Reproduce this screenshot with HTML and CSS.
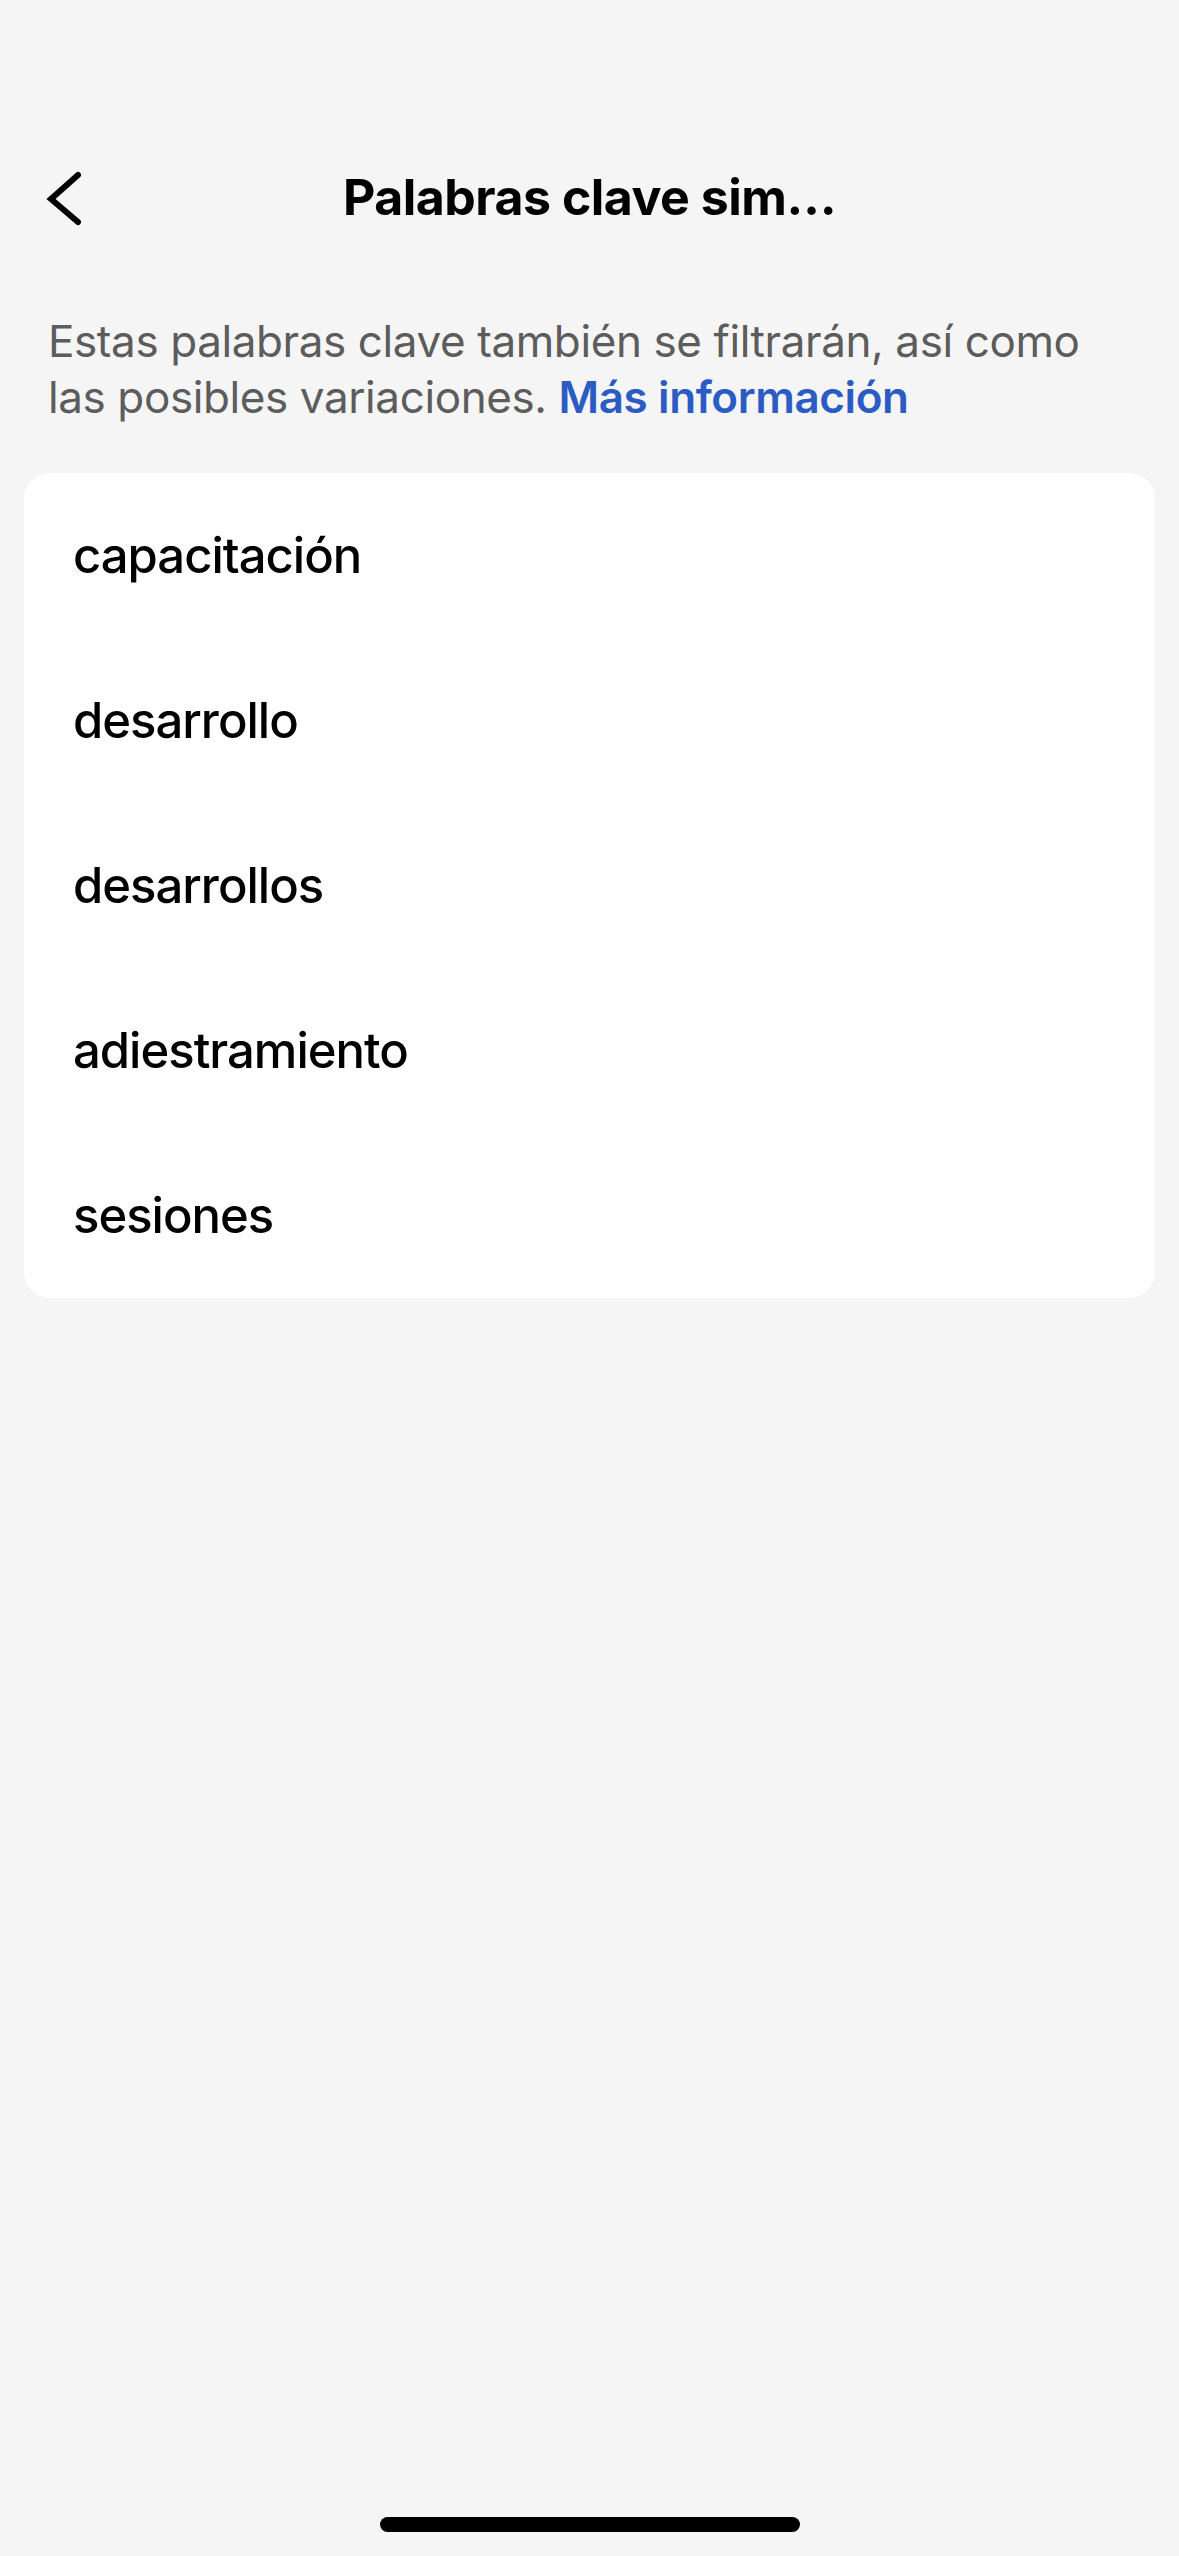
FILE: index.html
```html
<!DOCTYPE html>
<html lang="es">
<head>
<meta charset="utf-8">
<title>Palabras clave similares</title>
<link rel="stylesheet" href="styles.css">
</head>
<body>
<div class="screen">
  <header class="nav">
    <div class="nav-left">
      <svg class="back" width="40" height="60" viewBox="0 0 40 60" aria-hidden="true">
        <polyline points="34,6 7,30 34,53" fill="none" stroke="#000" stroke-width="6" stroke-linecap="round" stroke-linejoin="miter"/>
      </svg>
    </div>
    <h1 class="title">Palabras clave sim…</h1>
    <div class="nav-right"></div>
  </header>
  <p class="desc">Estas palabras clave también se filtrarán, así como las posibles variaciones. <a class="link" href="#">Más información</a></p>
  <ul class="card">
    <li class="row">capacitación</li>
    <li class="row">desarrollo</li>
    <li class="row">desarrollos</li>
    <li class="row">adiestramiento</li>
    <li class="row">sesiones</li>
  </ul>
  <div class="home-indicator"></div>
</div>
</body>
</html>
```
FILE: styles.css
```css
html, body {
  margin: 0;
  padding: 0;
  background: #f5f5f5;
}
body {
  font-family: Inter, "Noto Sans", "Liberation Sans", sans-serif;
  color: #000;
}
.screen {
  width: 1179px;
  height: 2556px;
  box-sizing: border-box;
  padding-top: 133px;
  position: relative;
  overflow: hidden;
  background: #f5f5f5;
}
.nav {
  height: 132px;
  display: grid;
  grid-template-columns: 1fr auto 1fr;
  align-items: center;
}
.nav-left {
  padding-left: 44px;
  display: flex;
  align-items: center;
}
.back {
  display: block;
}
.title {
  margin: 0;
  font-size: 50px;
  font-weight: 700;
  letter-spacing: -0.5px;
  line-height: 60px;
  padding-bottom: 4px;
}
.desc {
  margin: 48px 0 0;
  padding: 0 48px;
  font-size: 44px;
  line-height: 56px;
  color: #5c5c5c;
  letter-spacing: -0.4px;
}
.link {
  color: #2b5cc3;
  font-weight: 600;
  text-decoration: none;
}
.card {
  list-style: none;
  margin: 48px 24px 0;
  padding: 0;
  background: #fff;
  border-radius: 26px;
}
.row {
  height: 165px;
  display: flex;
  align-items: center;
  padding-left: 49px;
  font-size: 49px;
  font-weight: 500;
  letter-spacing: -1px;
}
.home-indicator {
  position: absolute;
  left: 380px;
  bottom: 24px;
  width: 420px;
  height: 15px;
  border-radius: 8px;
  background: #000;
}
```
